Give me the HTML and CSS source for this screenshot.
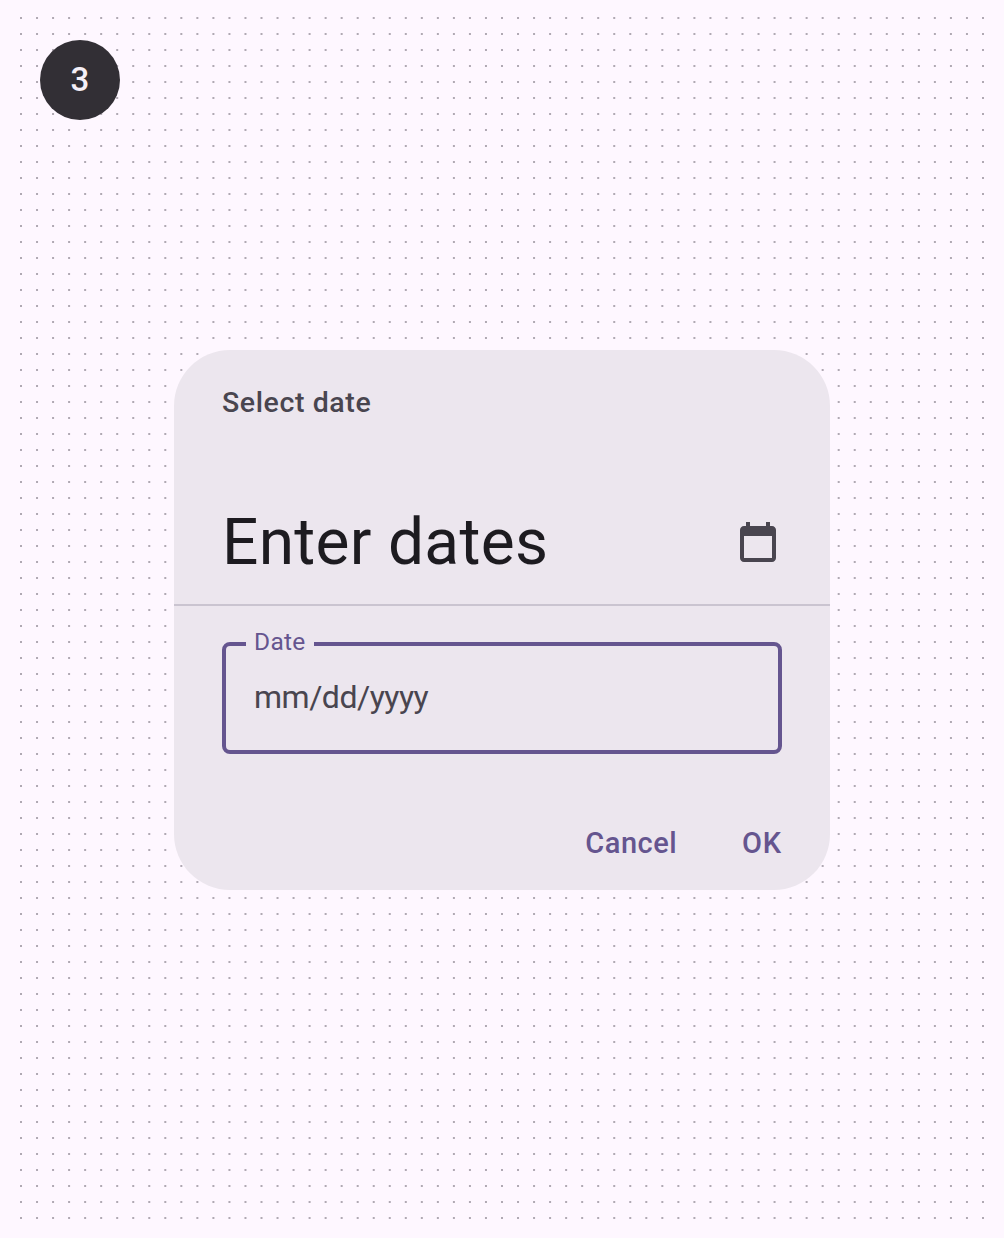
FILE: index.html
```html
<!DOCTYPE html>
<html lang="en">
<head>
<meta charset="utf-8">
<title>Select date</title>
<link rel="stylesheet" href="styles.css">
</head>
<body>
<main class="stage">
  <svg class="dots" width="1004" height="1238" aria-hidden="true">
    <defs>
      <pattern id="dot-row" x="0" y="17" width="1004" height="16" patternUnits="userSpaceOnUse">
        <path d="M20 1H984.1" stroke="#b0a9b3" stroke-width="2" stroke-dasharray="2 14.0333"/>
      </pattern>
    </defs>
    <rect y="17" width="1004" height="1202" fill="url(#dot-row)"/>
  </svg>
  <div class="step"><span class="step-number">3</span></div>
  <section class="dialog">
    <header class="dialog-header">
      <p class="supporting">Select date</p>
      <div class="headline-row">
        <h1 class="headline">Enter dates</h1>
        <svg class="calendar" viewBox="0 0 24 24" aria-hidden="true"><path fill="currentColor" d="M19 4h-1V2h-2v2H8V2H6v2H5c-1.110 0-2 .9-2 2v14c0 1.100.89 2 2 2h14c1.100 0 2-.9 2-2V6c0-1.100-.9-2-2-2zM19 20H5V9h14v11z"/></svg>
      </div>
    </header>
    <div class="field">
      <span class="field-label">Date</span>
      <span class="placeholder">mm/dd/yyyy</span>
    </div>
    <footer class="actions">
      <span class="action cancel">Cancel</span>
      <span class="action ok">OK</span>
    </footer>
  </section>
</main>
</body>
</html>
```
FILE: styles.css
```css
* { box-sizing: border-box; }

body {
  margin: 0;
  background: #fef7ff;
  font-family: Roboto, "Liberation Sans", sans-serif;
}

.stage {
  position: relative;
  height: 1238px;
  padding: 40px;
  display: flex;
  flex-direction: column;
}

.dots {
  position: absolute;
  top: 0;
  left: 0;
}

.step {
  position: relative;
  width: 80px;
  height: 80px;
  border-radius: 50%;
  background: #322f35;
  color: #f5eff7;
  display: flex;
  align-items: center;
  justify-content: center;
  font-size: 33px;
  font-weight: 500;
  line-height: 78px;
  padding-bottom: 1px;
}

.dialog {
  position: relative;
  align-self: center;
  width: 656px;
  height: 540px;
  margin-top: 230px;
  border-radius: 56px;
  background: #ece6ee;
  color: #49454f;
}

.dialog-header {
  height: 256px;
  padding: 33px 48px 0;
  border-bottom: 2px solid #cac4d0;
}

.supporting {
  margin: 0;
  font-size: 28.5px;
  font-weight: 500;
  line-height: 40px;
  letter-spacing: 0.6px;
}

.headline-row {
  display: flex;
  align-items: center;
  justify-content: space-between;
  height: 80px;
  margin-top: 79px;
}

.headline {
  margin: 0;
  padding-top: 2px;
  color: #1d1b20;
  font-size: 64px;
  font-weight: 400;
  line-height: 80px;
  letter-spacing: 0.3px;
}

.calendar {
  width: 48px;
  height: 48px;
}

.field {
  position: relative;
  display: flex;
  align-items: center;
  height: 112px;
  margin: 36px 48px 0;
  padding: 0 28px;
  border: 4px solid #65558f;
  border-radius: 8px;
}

.field-label {
  position: absolute;
  top: -20px;
  left: 20px;
  width: 68px;
  padding-left: 8px;
  background: #ece6ee;
  color: #65558f;
  font-size: 24.5px;
  line-height: 32px;
  letter-spacing: 0.3px;
}

.placeholder {
  font-size: 32px;
  line-height: 48px;
  padding-bottom: 2px;
  letter-spacing: -0.5px;
}

.actions {
  display: flex;
  justify-content: flex-end;
  margin-top: 69px;
  padding-right: 48px;
  color: #65558f;
  font-size: 29px;
  font-weight: 500;
  line-height: 40px;
}

.cancel {
  margin-right: 65px;
  letter-spacing: 0.5px;
}

.ok {
  letter-spacing: 0.8px;
}
```
